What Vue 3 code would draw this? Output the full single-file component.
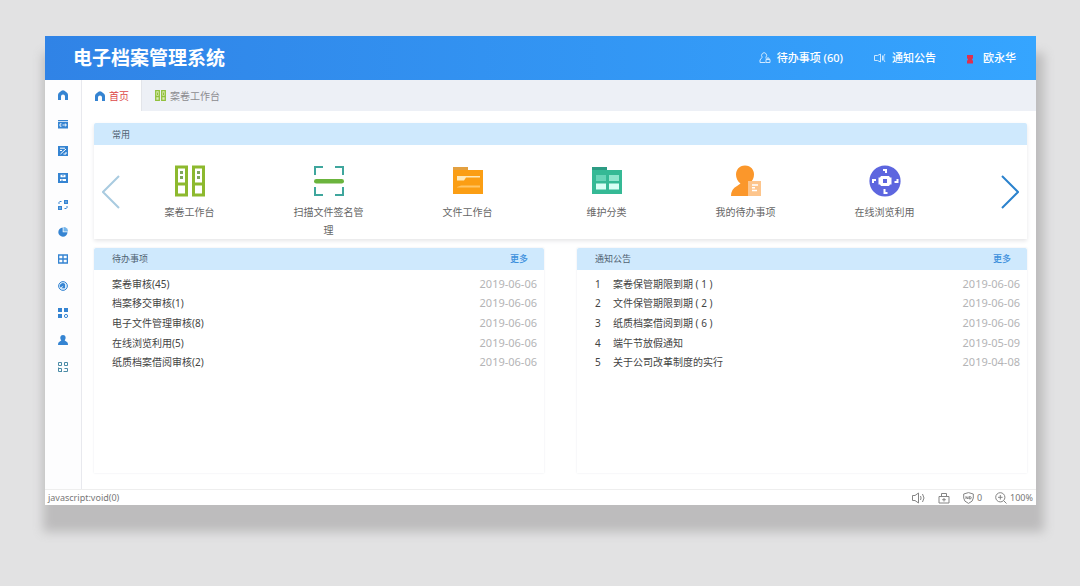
<script setup>
const sideIcons = ['archive', 'edit', 'save', 'flow', 'pie', 'grid', 'target', 'apps', 'user', 'frame']

const shortcuts = [
  { icon: 'cabinet', label: '案卷工作台' },
  { icon: 'scan', label: '扫描文件签名管理' },
  { icon: 'folder', label: '文件工作台' },
  { icon: 'category', label: '维护分类' },
  { icon: 'person', label: '我的待办事项' },
  { icon: 'browse', label: '在线浏览利用' },
]

const todos = [
  { text: '案卷审核(45)', date: '2019-06-06' },
  { text: '档案移交审核(1)', date: '2019-06-06' },
  { text: '电子文件管理审核(8)', date: '2019-06-06' },
  { text: '在线浏览利用(5)', date: '2019-06-06' },
  { text: '纸质档案借阅审核(2)', date: '2019-06-06' },
]

const notices = [
  { text: '案卷保管期限到期 ( 1 )', date: '2019-06-06' },
  { text: '文件保管期限到期 ( 2 )', date: '2019-06-06' },
  { text: '纸质档案借阅到期 ( 6 )', date: '2019-06-06' },
  { text: '端午节放假通知', date: '2019-05-09' },
  { text: '关于公司改革制度的实行', date: '2019-04-08' },
]
</script>

<template>
  <div class="desk">
    <div class="window">
      <header class="topbar">
        <h1>电子档案管理系统</h1>
        <nav class="user-nav" aria-label="用户">
          <a href="#todo">
            <svg width="12" height="12" viewBox="0 0 12 12" fill="none" stroke="#cfe8ff">
              <path d="M3.2 5.2A2.5 2.7 0 1 1 7 5.2M3.2 5.2 1 8V10.5H6.5M7 5.2V6.5" /><path d="M7 7.5H11V10.5H7zM8 7V6H10V7" />
            </svg>
            <span>待办事项 (60)</span>
          </a>
          <a href="#notice">
            <svg width="12" height="12" viewBox="0 0 12 12" fill="none" stroke="#cfe8ff">
              <path d="M.5 3.5H3.5L6.5 2V10L3.5 8.5H.5zM8.5 3.5V8.5M11 2 9.8 4V8L11 10" />
            </svg>
            <span>通知公告</span>
          </a>
          <a href="#me">
            <svg class="badge-icon" width="6" height="12" viewBox="0 0 6 12">
              <path d="M0 3H6V6L5 7.5 6 9V11.5H0V9L1 7.5 0 6z" fill="#e0304e" /><path d="M2 6.5H4V8H2z" fill="#a5486f" />
            </svg>
            <span>欧永华</span>
          </a>
        </nav>
      </header>

      <div class="body">
        <aside class="sidebar">
          <a class="home" href="#home" aria-label="首页">
            <svg width="10" height="10" viewBox="0 0 10 10"><path d="M0 10V5Q0 3.5 1 2.7L3.5.7Q5-.3 6.5.7L9 2.7Q10 3.5 10 5V10H7V6.5Q7 4.5 5 4.5T3 6.5V10z" fill="#3584d2" /></svg>
          </a>
          <a v-for="name in sideIcons" :key="name" :href="'#' + name" :aria-label="name">
            <svg width="10" height="10" viewBox="0 0 10 10" fill="#3584d2">
              <template v-if="name === 'archive'">
                <path d="M0 1H10V2.3H0zM0 3H10V9.5H0z" />
                <path d="M3.5 4.8H2V7.2H3.5M4.5 6H6M7 4.8V7.2L8.5 6z" fill="none" stroke="#fff" stroke-width=".9" />
              </template>
              <template v-else-if="name === 'edit'">
                <path d="M0 0H10V10H0z" /><path d="M2 2.2H7M2 4.5H4M2.5 8 8 3M5.5 8H8V6" fill="none" stroke="#fff" />
              </template>
              <template v-else-if="name === 'save'">
                <path d="M0 0H10V10H0z" /><path d="M2.5 1.8H7.5V4.3H2.5zM2 6H8V8H2z" fill="#fff" /><path d="M4.5 2H5.5V3.3H4.5zM3 6.8H5V7.5H3z" />
              </template>
              <template v-else-if="name === 'flow'">
                <path d="M6 0H10V4H6zM0 6H4V10H0z" /><path d="M1 4V1.5H4.5M9 6V8.5H5.5" fill="none" stroke="#3584d2" stroke-dasharray="2 1" /><path d="M7.5 1.5H8.5V2.5H7.5zM1.5 7.5H2.5V8.5H1.5z" fill="#fff" />
              </template>
              <template v-else-if="name === 'pie'">
                <path d="M4.7.5A4.6 4.6 0 1 0 9.5 5.3H4.7z" /><path d="M5.5 0A4.4 4.4 0 0 1 10 4.5H5.5z" fill="#75b5ea" />
              </template>
              <path v-else-if="name === 'grid'" d="M.6 1H9.4V9H.6zM5 1V9M.6 5H9.4" fill="none" stroke="#3584d2" stroke-width="1.4" />
              <template v-else-if="name === 'target'">
                <circle cx="5" cy="5" r="4.4" fill="#d7eafb" stroke="#3584d2" /><path d="M2.5 6.5A2.5 2.5 0 0 1 7 3.3V7.2H3.8L5.5 4.5" fill="#3584d2" />
              </template>
              <template v-else-if="name === 'apps'">
                <path d="M0 0H4V4H0zM6 0H10V4H6zM0 6H4V10H0z" /><circle cx="8" cy="8" r="1.6" fill="none" stroke="#3584d2" />
              </template>
              <path v-else-if="name === 'user'" d="M5 0C8 0 8.3 3.3 6.7 5.4L9 7Q10 7.7 10 10H0Q0 7.7 1 7L3.3 5.4C1.7 3.3 2 0 5 0z" />
              <path v-else d="M.5 3.5V.5H3.5V3.5zM9.5 3.5V.5H6.5V3.5H9.5M.5 5.5V9.5H4M.5 6.5H3.5V9.5M6.5 6.5H9.5V9.5H5.5" fill="none" stroke="#4b8ba6" />
            </svg>
          </a>
        </aside>

        <main class="main">
          <nav class="tabs" aria-label="页签">
            <button class="tab active" type="button">
              <svg width="10" height="10" viewBox="0 0 10 10"><path d="M0 10V5Q0 3.5 1 2.7L3.5.7Q5-.3 6.5.7L9 2.7Q10 3.5 10 5V10H7V6.5Q7 4.5 5 4.5T3 6.5V10z" fill="#3584d2" /></svg>
              首页
            </button>
            <button class="tab" type="button">
              <svg width="11" height="11" viewBox="0 0 11 11"><path d="M.7 .7H4.3V10.3H.7zM6.7 .7H10.3V10.3H6.7zM.7 6.5H4.3M6.7 6.5H10.3" fill="#dcebb8" stroke="#92c13d" stroke-width="1.3" /><path d="M2 2.5H3V5H2zM8 2.5H9V5H8z" fill="#92c13d" /></svg>
              案卷工作台
            </button>
          </nav>

          <div class="content">
            <section class="common">
              <h2 class="bar">常用</h2>
              <div class="carousel">
                <button class="arrow" type="button" aria-label="上一页">
                  <svg width="18" height="34" viewBox="0 0 18 34" fill="none" stroke="#a9cbe0" stroke-width="2"><path d="M17 1 1 17 17 33" /></svg>
                </button>
                <div class="shortcuts">
                  <a v-for="item in shortcuts" :key="item.label" :href="'#' + item.icon" class="shortcut">
                    <svg width="32" height="32" viewBox="0 0 32 32">
                      <template v-if="item.icon === 'cabinet'">
                        <path d="M2.5 2H12.5V30H2.5zM19.5 2H29.5V30H19.5zM2.5 19H12.5M19.5 19H29.5" fill="none" stroke="#8db92e" stroke-width="3" />
                        <path d="M6 6H9V9H6zM6 11H9V14H6zM23 6H26V9H23zM23 11H26V14H23z" fill="#7fa65c" />
                      </template>
                      <template v-else-if="item.icon === 'scan'">
                        <path d="M2 10V2H10M22 2H30V10M30 22V30H22M10 30H2V22" fill="none" stroke="#3fa69d" stroke-width="2" />
                        <rect x="1" y="14" width="30" height="4.6" rx="2.3" fill="#6bb43d" />
                      </template>
                      <template v-else-if="item.icon === 'folder'">
                        <path d="M1 5H31V29H1z" fill="#fb9e14" /><path d="M1 2H16V5H1z" fill="#e3a040" />
                        <path d="M5 11H28V12.6H14L12 15.5H5z" fill="#ffe9b8" /><path d="M5 22 9 20.5H28V22.5H5z" fill="#ffc565" />
                      </template>
                      <template v-else-if="item.icon === 'category'">
                        <path d="M1 2H16V5H1z" fill="#2d9c84" /><path d="M1 5H31V29H1z" fill="#35b995" />
                        <path d="M5 10H15V16H5z" fill="#67d4b7" /><path d="M18 10H28V16H18z" fill="#90e5cd" /><path d="M5 18.5H15V24.5H5zM18 18.5H28V24.5H18z" fill="#d9fff5" />
                      </template>
                      <template v-else-if="item.icon === 'person'">
                        <path d="M15 .5C21 .5 24 5 24 9.5 24 13 22.5 16 20 18L23 20V31H1Q1 24 7 21L10.5 18.5C7.5 16.5 6 13 6 9.5 6 5 9 .5 15 .5z" fill="#fb972b" />
                        <path d="M18 16H31V31H18z" fill="#fdc58c" /><path d="M22 20H28M22 22.7H25M22 25.5H27" stroke="#fff" stroke-width="1.5" />
                      </template>
                      <template v-else>
                        <circle cx="16" cy="16" r="15.6" fill="#5d66df" />
                        <path d="M12 11H20L21 12.5H22.5V19.5H21L20 21H12L11 19.5H9.5V12.5H11z" fill="#fff" /><path d="M14 14H18V18H14z" fill="#5d66df" />
                        <path d="M14 5H17V8M4 18V15H7M28.5 14V17H25.5M15.5 24V28H18.5" fill="none" stroke="#fff" stroke-width="2" />
                      </template>
                    </svg>
                    <span>{{ item.label }}</span>
                  </a>
                </div>
                <button class="arrow next" type="button" aria-label="下一页">
                  <svg width="18" height="34" viewBox="0 0 18 34" fill="none" stroke="#2b82cd" stroke-width="2"><path d="M1 1 17 17 1 33" /></svg>
                </button>
              </div>
            </section>

            <div class="panels">
              <section class="panel">
                <div class="bar"><h2>待办事项</h2><a href="#more-todos">更多</a></div>
                <ul>
                  <li v-for="row in todos" :key="row.text"><a href="#todo">{{ row.text }}</a><time>{{ row.date }}</time></li>
                </ul>
              </section>
              <section class="panel">
                <div class="bar"><h2>通知公告</h2><a href="#more-notices">更多</a></div>
                <ol>
                  <li v-for="(row, i) in notices" :key="row.text"><span class="num">{{ i + 1 }}</span><a href="#notice">{{ row.text }}</a><time>{{ row.date }}</time></li>
                </ol>
              </section>
            </div>
          </div>
        </main>
      </div>

      <footer class="status">
        <span class="link">javascript:void(0)</span>
        <svg width="13" height="12" viewBox="0 0 13 12" fill="none" stroke="#858585"><path d="M.5 3.5H3L6.5 1V11L3 8.5H.5zM8.5 4Q9.7 6 8.5 8M10.5 2Q13.5 6 10.5 10" /></svg>
        <svg width="12" height="12" viewBox="0 0 12 12" fill="none" stroke="#858585"><path d="M1 4.5H11V11H1zM3.5 4.5V1.5H8.5V4.5M6 6V9.5M4.2 7.7H7.8" /></svg>
        <span class="item">
          <svg width="11" height="12" viewBox="0 0 11 12" fill="none" stroke="#858585"><path d="M5.5.6 10.3 2V6Q10.3 9.5 5.5 11.4.7 9.5.7 6V2z" /><path d="M3 7V4.5L5 7V4.5M6.3 4.5V7Q8.5 7 8.3 5.7 8.2 4.5 6.3 4.5" /></svg>0
        </span>
        <span class="item">
          <svg width="12" height="12" viewBox="0 0 12 12" fill="none" stroke="#858585"><circle cx="5.3" cy="5.3" r="4.6" /><path d="M8.6 8.6 11.5 11.5M3 5.3H7.6M5.3 3V7.6" /></svg>100%
        </span>
      </footer>
    </div>
  </div>
</template>

<style>
body {
  background: #e2e2e3;
}
</style>

<style scoped>
.desk {
  box-sizing: border-box;
  min-height: 100vh;
  padding: 36px 44px 80px 45px;
  background: #e2e2e3;
  font: 10px/18px "Noto Sans", "Noto Sans CJK SC", sans-serif;
  color: #666;
}
a {
  color: inherit;
  text-decoration: none;
}
button {
  padding: 0;
  border: 0;
  background: none;
  font: inherit;
  color: inherit;
}
svg {
  display: block;
  flex: none;
}
h1,
h2,
ul,
ol {
  margin: 0;
  padding: 0;
  font-weight: 400;
  list-style: none;
}
.window {
  background: #fff;
  box-shadow: 3px 22px 10px 5px #bdbcbd;
}
.topbar {
  display: flex;
  align-items: center;
  justify-content: space-between;
  height: 44px;
  padding: 0 20px 0 28px;
  background: linear-gradient(90deg, #3083e6, #35a5ff);
  color: #fff;
}
h1 {
  font-size: 19px;
  line-height: 28px;
  font-weight: 700;
}
.user-nav {
  display: flex;
  gap: 31px;
  font-size: 11px;
  font-weight: 500;
}
.user-nav a {
  display: flex;
  align-items: center;
  gap: 6px;
}
.badge-icon {
  margin-right: 4px;
}
.body {
  display: flex;
}
.sidebar {
  display: flex;
  flex-direction: column;
  align-items: center;
  width: 36px;
  border-right: 1px solid #e8e9ee;
  background: #fdfdfe;
}
.sidebar a {
  display: flex;
  align-items: center;
  height: 27px;
}
.sidebar .home {
  height: 30px;
}
.main {
  flex: 1;
  min-width: 0;
}
.tabs {
  display: flex;
  height: 31px;
  background: #edf0f6;
}
.tab {
  display: flex;
  align-items: center;
  gap: 4px;
  padding: 0 12px 0 13px;
  color: #8c8c90;
}
.tab.active {
  background: #fff;
  border-right: 1px solid #e3e5ea;
  color: #dd4a4a;
}
.content {
  padding: 12px 9px 16px 12px;
}
.bar {
  display: flex;
  align-items: center;
  justify-content: space-between;
  box-sizing: border-box;
  height: 22px;
  padding: 0 16px 0 18px;
  border-radius: 2px 2px 0 0;
  background: #cfe9fd;
  font-size: 9px;
  color: #4f6272;
}
.common .bar {
  padding-top: 2px;
}
.bar h2 {
  font-size: 9px;
}
.bar a {
  color: #3c8fdc;
  font-weight: 500;
}
.common {
  box-shadow: 0 2px 4px #e6e6e8;
}
.carousel {
  display: flex;
  height: 94px;
}
.arrow {
  width: 26px;
  padding: 0 0 0 8px;
}
.next {
  width: 73px;
  padding-left: 47px;
}
.shortcuts {
  display: grid;
  flex: 1;
  grid-template-columns: repeat(6, 1fr);
}
.shortcut {
  display: flex;
  flex-direction: column;
  align-items: center;
  gap: 6px;
  padding-top: 20px;
}
.shortcut span {
  max-width: 76px;
  text-align: center;
}
.panels {
  display: grid;
  grid-template-columns: 1fr 1fr;
  gap: 33px;
  margin-top: 9px;
}
.panel {
  min-height: 225px;
  box-shadow: 0 0 2px #e9eaee;
}
.panel ul,
.panel ol {
  display: grid;
  grid-auto-rows: 1fr;
  height: 98px;
  padding: 4px 7px 0 18px;
  color: #444;
}
.panel li {
  display: flex;
  align-items: center;
}
.num {
  width: 18px;
}
time {
  margin-left: auto;
  font-size: 11px;
  color: #b4b4b6;
}
.status {
  display: flex;
  align-items: center;
  gap: 13px;
  box-sizing: border-box;
  height: 16px;
  padding: 0 3px;
  border-top: 1px solid #eee;
  line-height: 16px;
  font-size: 9px;
  color: #777;
}
.link {
  margin-right: auto;
}
.item {
  display: flex;
  align-items: center;
  gap: 3px;
}
</style>
